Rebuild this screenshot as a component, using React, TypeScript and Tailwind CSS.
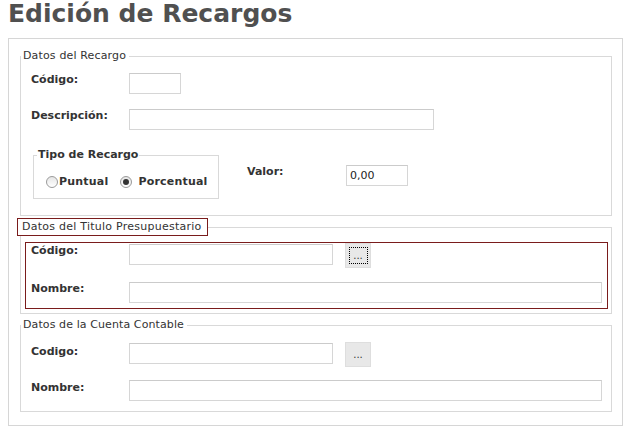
import React from "react";

const font = { fontFamily: '"DejaVu Sans", Verdana, sans-serif' };

function Radio({ label, checked }: { label: string; checked?: boolean }) {
  return (
    <label className="flex items-center">
      <span className="size-[12px] rounded-full border border-[#9a9a9a] bg-gradient-to-b from-[#e6e6e6] to-white flex items-center justify-center">
        {checked && <span className="size-[6px] rounded-full bg-[#333]" />}
      </span>
      <span className={checked ? "ml-[6px]" : "ml-[1px]"}>{label}</span>
    </label>
  );
}

function Input({ width, value }: { width: string; value?: string }) {
  return (
    <div
      className={`${width} h-[21px] border border-[#d6d6d6] border-t-[#cbcbcb] bg-white text-[11px] font-normal leading-[19px] pl-[3px] text-[#222]`}
    >
      {value}
    </div>
  );
}

function DotsButton({ focused }: { focused?: boolean }) {
  return (
    <button className="ml-[12px] -mt-[1px] w-[26px] h-[25px] bg-[#e8e8e8] border border-[#dedede] flex items-center justify-center p-0 font-normal">
      <span
        className={`w-[19px] h-[17px] flex items-center justify-center text-[10px] leading-none text-[#333] ${
          focused ? "border border-dotted border-black" : ""
        }`}
      >
        ...
      </span>
    </button>
  );
}

export default function App() {
  return (
    <div className="bg-white w-[626px] h-[430px] overflow-hidden text-[#333]" style={font}>
      <div className="pl-[8px]">
        <h1 className="text-[25px] leading-[28px] font-bold text-[#505050]">Edición de Recargos</h1>

        <div className="mt-[10px] w-[615px] border border-[#d6d6d6] pt-[8px] pl-[11px] pr-[10px] pb-[13px]">
          {/* Datos del Recargo */}
          <fieldset className="border border-[#d9d9d9] p-0 m-0 pl-[10px] pb-[16px]">
            <legend className="-ml-[10px] pl-[1px] pr-[2px] text-[11px] leading-[16px] tracking-[0.15px] border border-transparent">
              Datos del Recargo
            </legend>
            <div className="mt-[8px] flex items-start text-[11px] font-bold leading-[14px]">
              <span className="w-[98px]">Código:</span>
              <Input width="w-[52px]" />
            </div>
            <div className="mt-[15px] flex items-start text-[11px] font-bold leading-[14px]">
              <span className="w-[98px]">Descripción:</span>
              <Input width="w-[305px]" />
            </div>
            <div className="mt-[18px] flex items-start text-[11px] font-bold leading-[14px]">
              <fieldset className="ml-[2px] w-[186px] border border-[#d9d9d9] p-0 m-0 pb-[9px]">
                <legend className="ml-[3px] px-[1px] leading-[14px]">Tipo de Recargo</legend>
                <div className="mt-[13px] pl-[12px] flex items-center tracking-[0.2px]">
                  <Radio label="Puntual" />
                  <span className="ml-[12px]">
                    <Radio label="Porcentual" checked />
                  </span>
                </div>
              </fieldset>
              <div className="ml-[28px] mt-[17px] flex items-start">
                <span className="w-[99px]">Valor:</span>
                <Input width="w-[62px]" value="0,00" />
              </div>
            </div>
          </fieldset>

          {/* Datos del Titulo Presupuestario */}
          <fieldset className="mt-[2px] border border-[#d9d9d9] p-0 m-0 pb-[4px]">
            <legend className="-ml-[4px] pl-[4px] pr-[5px] text-[11px] leading-[16px] tracking-[0.25px] border border-[#7a1c1c]">
              Datos del Titulo Presupuestario
            </legend>
            <div className="mt-[6px] ml-[4px] mr-[3px] border border-[#7a1c1c] pt-[1px] pl-[5px] pb-[5px] text-[11px] font-bold leading-[14px]">
              <div className="flex items-start">
                <span className="w-[98px]">Código:</span>
                <Input width="w-[204px]" />
                <DotsButton focused />
              </div>
              <div className="mt-[14px] flex items-start">
                <span className="w-[98px]">Nombre:</span>
                <Input width="w-[473px]" />
              </div>
            </div>
          </fieldset>

          {/* Datos de la Cuenta Contable */}
          <fieldset className="mt-[2px] border border-[#d9d9d9] p-0 m-0 pl-[10px] pb-[10px]">
            <legend className="-ml-[10px] pl-[1px] pr-[2px] text-[11px] leading-[16px] tracking-[0.1px] border border-transparent">
              Datos de la Cuenta Contable
            </legend>
            <div className="mt-[9px] flex items-start text-[11px] font-bold leading-[14px]">
              <span className="w-[98px] mt-[2px]">Codigo:</span>
              <Input width="w-[204px]" />
              <DotsButton />
            </div>
            <div className="mt-[13px] flex items-start text-[11px] font-bold leading-[14px]">
              <span className="w-[98px] mt-[1px]">Nombre:</span>
              <Input width="w-[473px]" />
            </div>
          </fieldset>
        </div>
      </div>
    </div>
  );
}
